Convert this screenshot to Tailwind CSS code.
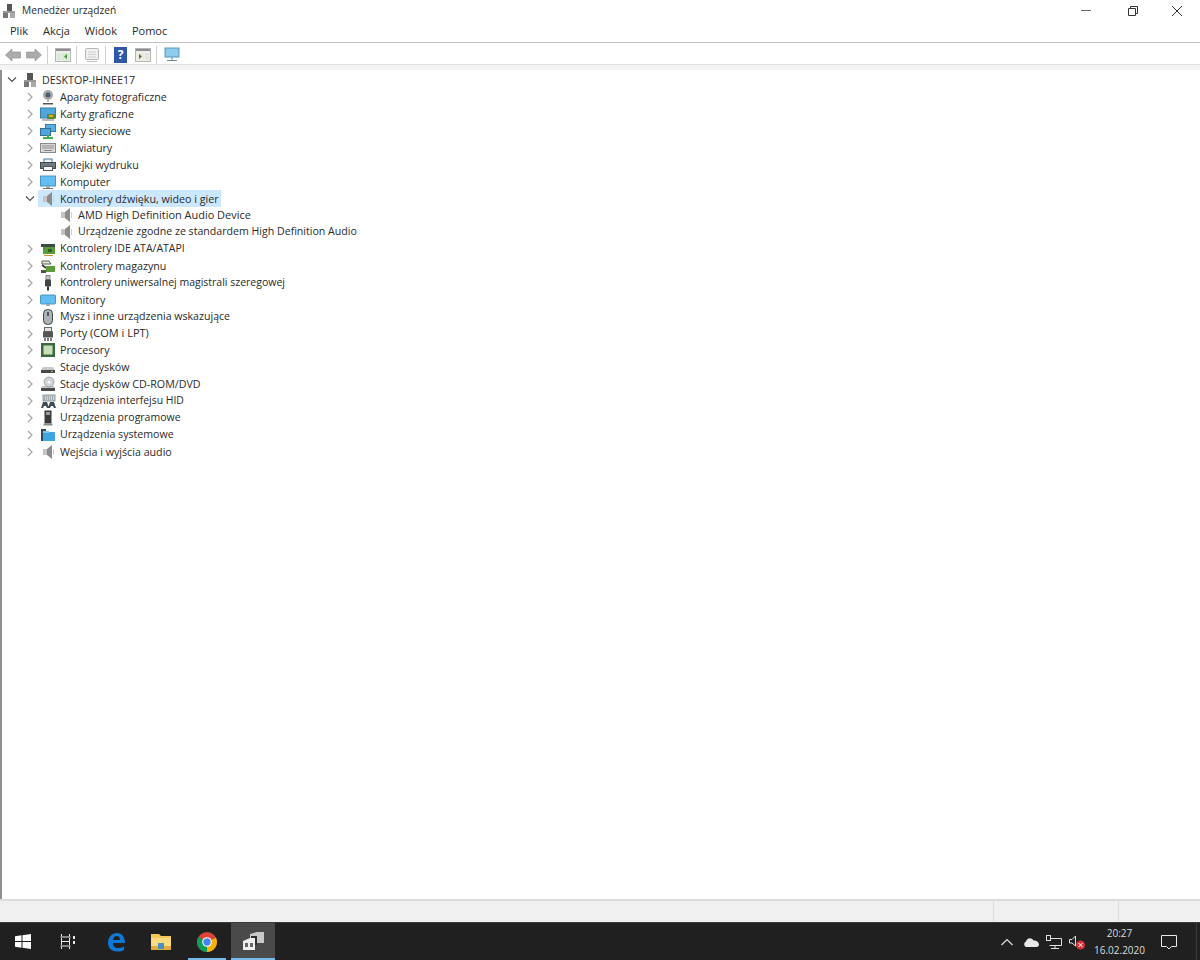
<!DOCTYPE html>
<html lang="pl">
<head>
  <meta charset="UTF-8">
  <title>Menedżer urządzeń</title>
  <script src="https://cdn.jsdelivr.net/npm/@tailwindcss/browser@4"></script>
</head>
<body class="bg-white text-[#2a2a2a] font-['Open_Sans','Liberation_Sans',sans-serif] text-[10.7px] overflow-hidden">
  <div class="h-[960px] w-[1200px] flex flex-col">
    <!-- pasek tytulu -->
    <div class="h-[21px] flex items-center shrink-0">
      <svg class="ml-[2px] w-[14px] h-[16px]" viewBox="0 0 14 16"><rect x="5" y="1" width="5" height="7" fill="#555"/><rect x="1" y="8" width="12" height="2" fill="#999"/><rect x="1" y="10" width="5" height="5" fill="#777"/><rect x="8" y="10" width="5" height="5" fill="#aaa"/></svg>
      <span class="ml-[6px] text-[10.2px]">Menedżer urządzeń</span>
      <div class="ml-auto flex items-center">
        <svg class="w-[46px] h-[20px]" viewBox="0 0 46 20"><path d="M19 9.5H29" stroke="#666"/></svg>
        <svg class="w-[46px] h-[20px]" viewBox="0 0 46 20"><path d="M20.5 7.5H27.5V14.5H20.5ZM22.5 7V5.500H29.500V12.500H28" fill="none" stroke="#333"/></svg>
        <svg class="w-[46px] h-[20px]" viewBox="0 0 46 20"><path d="M18 5L28 15M28 5L18 15" stroke="#333"/></svg>
      </div>
    </div>
    <!-- menu -->
    <div class="h-[21px] flex items-center shrink-0 border-b border-[#c4c4c4] box-content pl-[10px] gap-[15px] text-[11px]">
      <span>Plik</span><span>Akcja</span><span>Widok</span><span>Pomoc</span>
    </div>
    <!-- pasek narzedzi -->
    <div class="h-[21px] flex items-center shrink-0 pl-[5px] pt-[2px]">
      <svg class="w-[16px] h-[14px]" viewBox="0 0 16 14"><path d="M0.500 7L7 1V4H15.500V10H7V13Z" fill="#a8ada8" stroke="#8c8c8c" stroke-width=".6"/></svg>
      <svg class="ml-[5px] w-[16px] h-[14px]" viewBox="0 0 16 14"><path d="M15.500 7L9 1V4H0.500V10H9V13Z" fill="#a8ada8" stroke="#8c8c8c" stroke-width=".6"/></svg>
      <div class="ml-[5px] w-px h-[18px] bg-[#d0d0d0]"></div>
      <svg class="ml-[7px] w-[16px] h-[14px]" viewBox="0 0 16 14"><rect x=".5" y=".5" width="15" height="13" fill="#eee" stroke="#b5b5b5"/><rect x="1" y="1" width="14" height="2" fill="#8f8f8f"/><rect x="2" y="5" width="4" height="7" fill="#dfe7d8"/><rect x="7" y="5" width="7" height="7" fill="#d5ecd0"/><path d="M9 8.500L12 6V11Z" fill="#4f8f4a"/></svg>
      <div class="ml-[5px] w-px h-[18px] bg-[#d0d0d0]"></div>
      <svg class="ml-[7px] w-[16px] h-[16px]" viewBox="0 0 16 16"><rect x="1.500" y="1.500" width="13" height="11" rx="1" fill="#f0f0f0" stroke="#b5b5b5"/><path d="M4 5H12M4 7.500H12M4 10H12" stroke="#cfcfcf"/><path d="M3 14.500H13" stroke="#c0c0c0"/></svg>
      <div class="ml-[5px] w-px h-[18px] bg-[#d0d0d0]"></div>
      <div class="ml-[8px] w-[13px] h-[16px] bg-[#2f57a8] text-white font-bold text-[12px] leading-[16px] text-center">?</div>
      <svg class="ml-[8px] w-[16px] h-[14px]" viewBox="0 0 16 14"><rect x=".5" y=".5" width="15" height="13" fill="#eee" stroke="#b5b5b5"/><rect x="1" y="1" width="14" height="2" fill="#8f8f8f"/><rect x="10" y="5" width="4" height="7" fill="#dfe7d8"/><rect x="2" y="5" width="7" height="7" fill="#e8ecd8"/><path d="M7 8.500L4 6V11Z" fill="#4f6f4a"/></svg>
      <div class="ml-[5px] w-px h-[18px] bg-[#d0d0d0]"></div>
      <svg class="ml-[7px] w-[16px] h-[15px]" viewBox="0 0 16 15"><rect x="1" y="1" width="14" height="9" fill="#8ccbee" stroke="#5a98bb"/><path d="M8 10V13M3 13.500H13" stroke="#5a8fae"/></svg>
    </div>
    <div class="h-[6px] shrink-0 border-t border-[#dedede] bg-[#f4f4f4]"></div>
    <!-- drzewo urzadzen -->
    <div class="flex-1 border-l-2 border-[#8f8f8f] pl-px pt-[2px] min-h-0">
      <ul class="flex flex-col">
        <li class="h-[16.886px] flex items-center pl-[4px]">
          <svg class="w-[10px] h-[8px]" viewBox="0 0 10 8"><path d="M1 1.500L5 5.500L9 1.500" fill="none" stroke="#555" stroke-width="1.200"/></svg>
          <svg class="ml-[5px] w-[16px] h-[16px]" viewBox="0 0 16 16"><rect x="5" y="1" width="6" height="7" fill="#555"/><rect x="2" y="8" width="12" height="2" fill="#999"/><rect x="2" y="10" width="5" height="5" fill="#777"/><rect x="9" y="10" width="5" height="5" fill="#aaa"/></svg>
          <span class="ml-[4px]">DESKTOP-IHNEE17</span>
        </li>
        <li class="h-[16.886px] flex items-center pl-[22px]">
          <svg class="w-[10px] h-[10px]" viewBox="0 0 10 10"><path d="M3 1L7 5L3 9" fill="none" stroke="#a6a6a6" stroke-width="1.200"/></svg>
          <svg class="ml-[5px] w-[16px] h-[16px]" viewBox="0 0 16 16"><circle cx="8" cy="6" r="5" fill="#a8a8a8"/><circle cx="8" cy="6" r="2.500" fill="#4a6070"/><path d="M8 11V13" stroke="#777"/><path d="M3 14H13V15.500H3Z" fill="#555"/></svg>
          <span class="ml-[4px]">Aparaty fotograficzne</span>
        </li>
        <li class="h-[16.886px] flex items-center pl-[22px]">
          <svg class="w-[10px] h-[10px]" viewBox="0 0 10 10"><path d="M3 1L7 5L3 9" fill="none" stroke="#a6a6a6" stroke-width="1.200"/></svg>
          <svg class="ml-[5px] w-[16px] h-[16px]" viewBox="0 0 16 16"><rect x="0.500" y="2" width="15" height="10" fill="#4ea6dc" stroke="#3b7ea8"/><rect x="7" y="8" width="8" height="5" fill="#5d8a2e"/><rect x="9" y="9" width="4" height="2" fill="#e0b030"/><path d="M2 14H14" stroke="#777"/></svg>
          <span class="ml-[4px]">Karty graficzne</span>
        </li>
        <li class="h-[16.886px] flex items-center pl-[22px]">
          <svg class="w-[10px] h-[10px]" viewBox="0 0 10 10"><path d="M3 1L7 5L3 9" fill="none" stroke="#a6a6a6" stroke-width="1.200"/></svg>
          <svg class="ml-[5px] w-[16px] h-[16px]" viewBox="0 0 16 16"><rect x="5.500" y="1.500" width="10" height="7" fill="#58aee0" stroke="#3b7ea8"/><rect x="0.500" y="5.500" width="10" height="7" fill="#4ea6dc" stroke="#2f6f98"/><path d="M3 15H13" stroke="#3fae49" stroke-width="2"/><path d="M8 12V14" stroke="#3fae49" stroke-width="2"/></svg>
          <span class="ml-[4px]">Karty sieciowe</span>
        </li>
        <li class="h-[16.886px] flex items-center pl-[22px]">
          <svg class="w-[10px] h-[10px]" viewBox="0 0 10 10"><path d="M3 1L7 5L3 9" fill="none" stroke="#a6a6a6" stroke-width="1.200"/></svg>
          <svg class="ml-[5px] w-[16px] h-[16px]" viewBox="0 0 16 16"><rect x="0.500" y="3.500" width="15" height="9" fill="#d8d8d8" stroke="#8a8a8a"/><path d="M2 6H14M2 8H14M4 10.500H12" stroke="#8f8f8f"/></svg>
          <span class="ml-[4px]">Klawiatury</span>
        </li>
        <li class="h-[16.886px] flex items-center pl-[22px]">
          <svg class="w-[10px] h-[10px]" viewBox="0 0 10 10"><path d="M3 1L7 5L3 9" fill="none" stroke="#a6a6a6" stroke-width="1.200"/></svg>
          <svg class="ml-[5px] w-[16px] h-[16px]" viewBox="0 0 16 16"><rect x="4" y="2" width="8" height="4" fill="#eef4f8" stroke="#4a7fa0"/><rect x="0.500" y="5.500" width="15" height="6" fill="#6d7a82" stroke="#3f4a50"/><rect x="3.500" y="9.500" width="9" height="4" fill="#fff" stroke="#555"/></svg>
          <span class="ml-[4px]">Kolejki wydruku</span>
        </li>
        <li class="h-[16.886px] flex items-center pl-[22px]">
          <svg class="w-[10px] h-[10px]" viewBox="0 0 10 10"><path d="M3 1L7 5L3 9" fill="none" stroke="#a6a6a6" stroke-width="1.200"/></svg>
          <svg class="ml-[5px] w-[16px] h-[16px]" viewBox="0 0 16 16"><rect x="0.500" y="2" width="15" height="10" fill="#62bdf0" stroke="#4a94c2"/><rect x="6" y="12" width="4" height="2" fill="#a8a8a8"/><rect x="3" y="14" width="10" height="1" fill="#777"/></svg>
          <span class="ml-[4px]">Komputer</span>
        </li>
        <li class="h-[16.886px] flex items-center pl-[22px]">
          <svg class="w-[10px] h-[8px]" viewBox="0 0 10 8"><path d="M1 1.500L5 5.500L9 1.500" fill="none" stroke="#555" stroke-width="1.200"/></svg>
          <div class="ml-[3px] flex items-center h-[17px] bg-[#cce8ff] pl-[2px] pr-[2px]">
            <svg class="w-[16px] h-[16px]" viewBox="0 0 16 16"><rect x="3" y="5" width="4" height="6" fill="#c4c4c4"/><path d="M7 5L12 1V15L7 11Z" fill="#8c8c8c"/><path d="M13.500 5V11" stroke="#cfcfcf"/></svg>
            <span class="ml-[4px]">Kontrolery dźwięku, wideo i gier</span>
          </div>
        </li>
        <li class="h-[16.886px] flex items-center pl-[40px]">
          <div class="w-[10px]"></div>
          <svg class="ml-[5px] w-[16px] h-[16px]" viewBox="0 0 16 16"><rect x="3" y="5" width="4" height="6" fill="#c4c4c4"/><path d="M7 5L12 1V15L7 11Z" fill="#8c8c8c"/><path d="M13.500 5V11" stroke="#cfcfcf"/></svg>
          <span class="ml-[4px] text-[10.95px]">AMD High Definition Audio Device</span>
        </li>
        <li class="h-[16.886px] flex items-center pl-[40px]">
          <div class="w-[10px]"></div>
          <svg class="ml-[5px] w-[16px] h-[16px]" viewBox="0 0 16 16"><rect x="3" y="5" width="4" height="6" fill="#c4c4c4"/><path d="M7 5L12 1V15L7 11Z" fill="#8c8c8c"/><path d="M13.500 5V11" stroke="#cfcfcf"/></svg>
          <span class="ml-[4px] text-[10.6px]">Urządzenie zgodne ze standardem High Definition Audio</span>
        </li>
        <li class="h-[16.886px] flex items-center pl-[22px]">
          <svg class="w-[10px] h-[10px]" viewBox="0 0 10 10"><path d="M3 1L7 5L3 9" fill="none" stroke="#a6a6a6" stroke-width="1.200"/></svg>
          <svg class="ml-[5px] w-[16px] h-[16px]" viewBox="0 0 16 16"><rect x="1" y="3" width="14" height="3" fill="#3c4a44"/><rect x="3" y="6" width="12" height="7" fill="#5c9a3c"/><rect x="8" y="8" width="4" height="3" fill="#2f5f24"/><path d="M4 14.500H13" stroke="#c09a30"/></svg>
          <span class="ml-[4px] text-[10.5px]">Kontrolery IDE ATA/ATAPI</span>
        </li>
        <li class="h-[16.886px] flex items-center pl-[22px]">
          <svg class="w-[10px] h-[10px]" viewBox="0 0 10 10"><path d="M3 1L7 5L3 9" fill="none" stroke="#a6a6a6" stroke-width="1.200"/></svg>
          <svg class="ml-[5px] w-[16px] h-[16px]" viewBox="0 0 16 16"><path d="M2 3H9L11 6H2Z" fill="#e8e8d8" stroke="#55604f"/><path d="M2 7L6 10" stroke="#444" stroke-width="2"/><rect x="6" y="8" width="9" height="6" fill="#5c9a3c"/><rect x="1" y="12" width="5" height="3" fill="#4a5a4a"/></svg>
          <span class="ml-[4px]">Kontrolery magazynu</span>
        </li>
        <li class="h-[16.886px] flex items-center pl-[22px]">
          <svg class="w-[10px] h-[10px]" viewBox="0 0 10 10"><path d="M3 1L7 5L3 9" fill="none" stroke="#a6a6a6" stroke-width="1.200"/></svg>
          <svg class="ml-[5px] w-[16px] h-[16px]" viewBox="0 0 16 16"><rect x="6" y="0.500" width="4" height="4" fill="#c8c8c8" stroke="#666" stroke-width=".7"/><rect x="5" y="4.500" width="6" height="7" rx="1" fill="#444"/><rect x="7" y="11.500" width="2" height="4" fill="#333"/></svg>
          <span class="ml-[4px] text-[10.5px]">Kontrolery uniwersalnej magistrali szeregowej</span>
        </li>
        <li class="h-[16.886px] flex items-center pl-[22px]">
          <svg class="w-[10px] h-[10px]" viewBox="0 0 10 10"><path d="M3 1L7 5L3 9" fill="none" stroke="#a6a6a6" stroke-width="1.200"/></svg>
          <svg class="ml-[5px] w-[16px] h-[16px]" viewBox="0 0 16 16"><rect x="0.500" y="3" width="15" height="9" rx="1" fill="#62bdf0" stroke="#4a94c2"/><rect x="6" y="12" width="4" height="2" fill="#a8a8a8"/></svg>
          <span class="ml-[4px]">Monitory</span>
        </li>
        <li class="h-[16.886px] flex items-center pl-[22px]">
          <svg class="w-[10px] h-[10px]" viewBox="0 0 10 10"><path d="M3 1L7 5L3 9" fill="none" stroke="#a6a6a6" stroke-width="1.200"/></svg>
          <svg class="ml-[5px] w-[16px] h-[16px]" viewBox="0 0 16 16"><rect x="3.500" y="0.500" width="9" height="15" rx="4" fill="#a9b2b8" stroke="#444"/><rect x="7" y="3" width="2" height="4" fill="#555"/></svg>
          <span class="ml-[4px] text-[10.6px]">Mysz i inne urządzenia wskazujące</span>
        </li>
        <li class="h-[16.886px] flex items-center pl-[22px]">
          <svg class="w-[10px] h-[10px]" viewBox="0 0 10 10"><path d="M3 1L7 5L3 9" fill="none" stroke="#a6a6a6" stroke-width="1.200"/></svg>
          <svg class="ml-[5px] w-[16px] h-[16px]" viewBox="0 0 16 16"><rect x="4.500" y="1.500" width="7" height="4" fill="#e4e4e4" stroke="#666"/><rect x="3" y="5.500" width="10" height="6" fill="#555"/><path d="M5 12V15M8 12V15M11 12V15" stroke="#555" stroke-width="1.500"/></svg>
          <span class="ml-[4px] text-[11px]">Porty (COM i LPT)</span>
        </li>
        <li class="h-[16.886px] flex items-center pl-[22px]">
          <svg class="w-[10px] h-[10px]" viewBox="0 0 10 10"><path d="M3 1L7 5L3 9" fill="none" stroke="#a6a6a6" stroke-width="1.200"/></svg>
          <svg class="ml-[5px] w-[16px] h-[16px]" viewBox="0 0 16 16"><rect x="1" y="1" width="14" height="14" fill="#3a6a40"/><rect x="3.500" y="3.500" width="9" height="9" fill="#c9dfb8"/></svg>
          <span class="ml-[4px]">Procesory</span>
        </li>
        <li class="h-[16.886px] flex items-center pl-[22px]">
          <svg class="w-[10px] h-[10px]" viewBox="0 0 10 10"><path d="M3 1L7 5L3 9" fill="none" stroke="#a6a6a6" stroke-width="1.200"/></svg>
          <svg class="ml-[5px] w-[16px] h-[16px]" viewBox="0 0 16 16"><path d="M3 8H13L15 11H1Z" fill="#c8c8c8"/><rect x="1" y="11" width="14" height="3" fill="#4a4a4a"/><path d="M11 12.500H13" stroke="#7ed07e"/></svg>
          <span class="ml-[4px]">Stacje dysków</span>
        </li>
        <li class="h-[16.886px] flex items-center pl-[22px]">
          <svg class="w-[10px] h-[10px]" viewBox="0 0 10 10"><path d="M3 1L7 5L3 9" fill="none" stroke="#a6a6a6" stroke-width="1.200"/></svg>
          <svg class="ml-[5px] w-[16px] h-[16px]" viewBox="0 0 16 16"><path d="M2 10H14L15 12H1Z" fill="#c8c8c8"/><rect x="1" y="12" width="14" height="3" fill="#4a4a4a"/><circle cx="9" cy="6" r="5" fill="#cfd4d6" stroke="#8a8f92" stroke-width=".7"/><circle cx="9" cy="6" r="1.500" fill="#fff"/></svg>
          <span class="ml-[4px]">Stacje dysków CD-ROM/DVD</span>
        </li>
        <li class="h-[16.886px] flex items-center pl-[22px]">
          <svg class="w-[10px] h-[10px]" viewBox="0 0 10 10"><path d="M3 1L7 5L3 9" fill="none" stroke="#a6a6a6" stroke-width="1.200"/></svg>
          <svg class="ml-[5px] w-[16px] h-[16px]" viewBox="0 0 16 16"><rect x="3" y="2" width="12" height="6" fill="#cdd3d8" stroke="#6a7278" stroke-width=".7"/><path d="M4 4H14M4 6H14" stroke="#7c858c" stroke-dasharray="1 1"/><path d="M1 15L3 9H7L9 15L7 15L6 13H4L3 15ZM8 15L10 9H14L16 15H14L13 13H11L10 15Z" fill="#3f4c55"/></svg>
          <span class="ml-[4px] text-[10.4px]">Urządzenia interfejsu HID</span>
        </li>
        <li class="h-[16.886px] flex items-center pl-[22px]">
          <svg class="w-[10px] h-[10px]" viewBox="0 0 10 10"><path d="M3 1L7 5L3 9" fill="none" stroke="#a6a6a6" stroke-width="1.200"/></svg>
          <svg class="ml-[5px] w-[16px] h-[16px]" viewBox="0 0 16 16"><rect x="4.500" y="0.500" width="7" height="13" fill="#3a3a3a"/><rect x="6" y="2" width="4" height="3" fill="#9a9a9a"/><rect x="3.500" y="13.500" width="9" height="2" fill="#8a8a8a"/></svg>
          <span class="ml-[4px] text-[10.5px]">Urządzenia programowe</span>
        </li>
        <li class="h-[16.886px] flex items-center pl-[22px]">
          <svg class="w-[10px] h-[10px]" viewBox="0 0 10 10"><path d="M3 1L7 5L3 9" fill="none" stroke="#a6a6a6" stroke-width="1.200"/></svg>
          <svg class="ml-[5px] w-[16px] h-[16px]" viewBox="0 0 16 16"><rect x="1" y="2" width="5" height="12" fill="#37474f"/><rect x="3" y="5" width="12" height="9" fill="#3fa5e0"/><rect x="3" y="4" width="6" height="2" fill="#7cc6ef"/></svg>
          <span class="ml-[4px] text-[10.6px]">Urządzenia systemowe</span>
        </li>
        <li class="h-[16.886px] flex items-center pl-[22px]">
          <svg class="w-[10px] h-[10px]" viewBox="0 0 10 10"><path d="M3 1L7 5L3 9" fill="none" stroke="#a6a6a6" stroke-width="1.200"/></svg>
          <svg class="ml-[5px] w-[16px] h-[16px]" viewBox="0 0 16 16"><rect x="3" y="5" width="4" height="6" fill="#c4c4c4"/><path d="M7 5L12 1V15L7 11Z" fill="#8c8c8c"/><path d="M13.500 5V11" stroke="#cfcfcf"/></svg>
          <span class="ml-[4px]">Wejścia i wyjścia audio</span>
        </li>
      </ul>
    </div>
    <!-- pasek stanu -->
    <div class="h-[23px] shrink-0 border-t-2 border-[#dcdcdc] bg-[#f0f0f0] flex justify-end">
      <div class="w-px bg-[#dcdcdc]"></div>
      <div class="w-[124px] shrink-0"></div>
      <div class="w-px bg-[#dcdcdc]"></div>
      <div class="w-[81px] shrink-0"></div>
    </div>
    <!-- pasek zadan -->
    <div class="h-[38px] shrink-0 bg-[#202020] border-t border-[#3a3a3a] flex items-center text-[#dcdcdc]">
      <svg class="ml-[15px] w-[16px] h-[15px]" viewBox="0 0 16 15"><path d="M0 2.200L6.500 1.300V7H0ZM7.500 1.200L16 0V7H7.500ZM0 8H6.500V13.700L0 12.800ZM7.500 8H16V15L7.500 13.800Z" fill="#fff"/></svg>
      <svg class="ml-[29px] w-[16px] h-[15px]" viewBox="0 0 16 15"><path d="M0.500 3H10.500M0.500 12H10.500M1.500 0V2.500M9.500 0V2.500M1.500 12.500V15M9.500 12.500V15M1.500 4V11M9.500 4V11M1.500 7.500H9.500" stroke="#e8e8e8" fill="none"/><path d="M14 2V5M14 7V10" stroke="#e8e8e8" stroke-width="2"/></svg>
      <svg class="ml-[30px] w-[20px] h-[20px]" viewBox="0 0 20 20"><path d="M2 11C2 5 6 1 11 1C16 1 19 5 19 11H7C7 14 9 16 12 16C14 16 16 15.500 18 14.500V18C16 19 14 19.500 11.500 19.500C6 19.500 2 16 2 11ZM7 8H14C14 5.500 13 4 10.500 4C8.500 4 7.500 5.500 7 8Z" fill="#0f78d4"/></svg>
      <svg class="ml-[25px] w-[20px] h-[18px]" viewBox="0 0 20 18"><path d="M0 1H8L10 3H20V17H0Z" fill="#f4c95a"/><rect x="0" y="5" width="20" height="12" fill="#fbdc7c"/><rect x="0" y="13" width="20" height="4" fill="#e2ad3b"/><rect x="7" y="10" width="6" height="6" fill="#4a90c8"/></svg>
      <div class="ml-[17px] w-[38px] h-[37px] flex items-center justify-center relative">
        <svg class="w-[20px] h-[20px]" viewBox="0 0 20 20"><circle cx="10" cy="10" r="10" fill="#db4437"/><path d="M10 10L1.300 5A10 10 0 0 0 10 20Z" fill="#0f9d58"/><path d="M10 10V20A10 10 0 0 0 19 5.700Z" fill="#f4b400"/><circle cx="10" cy="10" r="4.800" fill="#fff"/><circle cx="10" cy="10" r="3.700" fill="#4285f4"/></svg>
        <div class="absolute left-0 right-0 bottom-0 h-[2px] bg-[#76b9ed]"></div>
      </div>
      <div class="ml-[5px] w-[44px] h-[37px] bg-[#4a4a4a] flex items-center justify-center relative">
        <svg class="w-[21px] h-[19px]" viewBox="0 0 21 19"><path d="M7 2L14 0H21V11H14V13H7Z" fill="#c8c8c8"/><path d="M8 4H14V13H8Z" fill="#2e2e2e"/><path d="M0 9L7 6H12V18H0Z" fill="#f0f0f0"/><rect x="2" y="11" width="3" height="4" fill="#666"/><rect x="7" y="11" width="3" height="4" fill="#666"/></svg>
        <div class="absolute left-0 right-0 bottom-0 h-[2px] bg-[#76b9ed]"></div>
      </div>
      <div class="ml-auto flex items-center">
        <svg class="w-[12px] h-[8px]" viewBox="0 0 12 8"><path d="M0.500 7L6 1.500L11.500 7" fill="none" stroke="#e0e0e0" stroke-width="1.200"/></svg>
        <svg class="ml-[10px] w-[16px] h-[10px]" viewBox="0 0 16 10"><path d="M3 10A3 3 0 0 1 3 4.500C4 1 8.500 0 10.500 3.500C13.500 3 16 5.500 16 7.500C16 9 15 10 13.500 10Z" fill="#e8e8e8"/></svg>
        <svg class="ml-[7px] w-[16px] h-[14px]" viewBox="0 0 16 14"><path d="M3.500 3.500H15.500V10.500H3.500M9 10.500V13M5 13.500H13" fill="none" stroke="#e0e0e0"/><rect x="0.500" y="0.500" width="4" height="5" fill="#202020" stroke="#e0e0e0"/></svg>
        <svg class="ml-[7px] w-[16px] h-[16px]" viewBox="0 0 16 16"><path d="M0.500 5.500H3L6.500 2V12L3 9H0.500Z" fill="none" stroke="#e0e0e0"/><circle cx="11.500" cy="11" r="4.500" fill="#d13438"/><path d="M9.500 9L13.500 13M13.500 9L9.500 13" stroke="#fff"/></svg>
        <div class="ml-[9px] w-[51px] flex flex-col items-center text-[10px] leading-[17px]">
          <span>20:27</span>
          <span>16.02.2020</span>
        </div>
        <svg class="ml-[16px] w-[16px] h-[16px]" viewBox="0 0 16 16"><path d="M0.500 1.500H15.500V12.500H10.500L8 15L5.500 12.500H0.500Z" fill="none" stroke="#e8e8e8"/></svg>
        <div class="ml-[19px] w-px h-[37px] bg-[#3a3a3a] mr-[3px]"></div>
      </div>
    </div>
  </div>
</body>
</html>
